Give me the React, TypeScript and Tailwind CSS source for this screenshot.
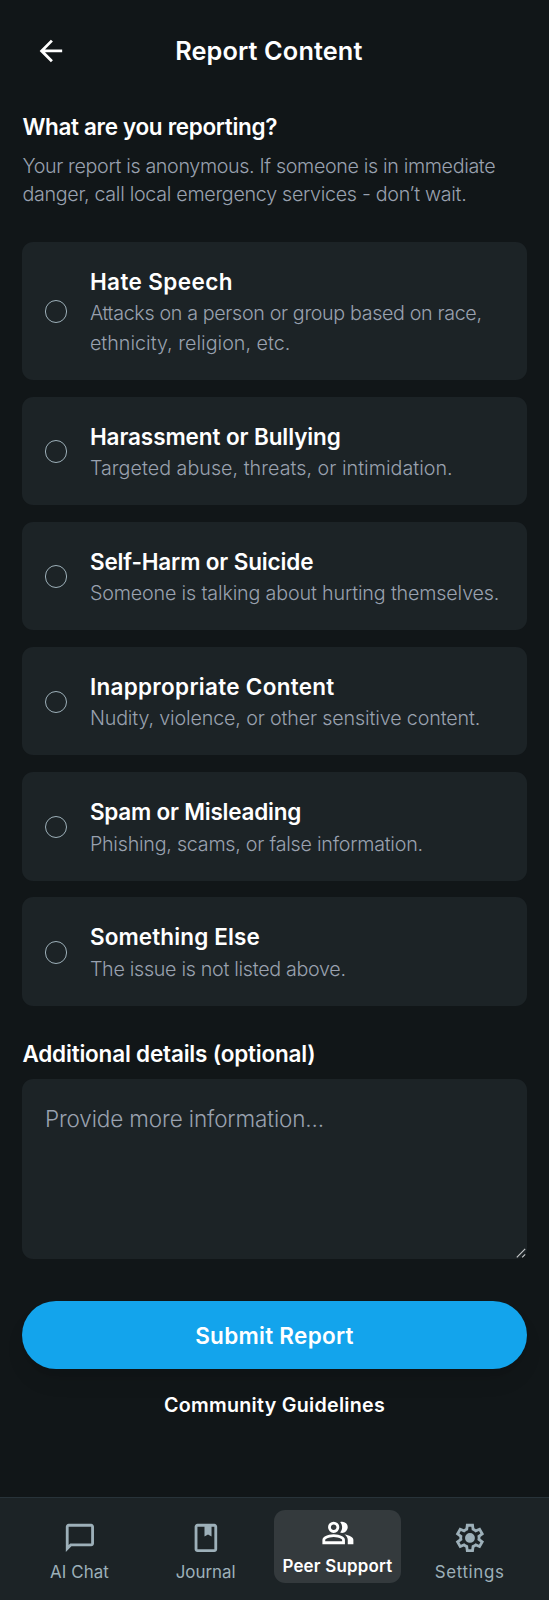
import React from "react";

type Option = { title: string; titleClass: string; lines: { text: string; className: string }[] };

const options: Option[] = [
  {
    title: "Hate Speech",
    titleClass: "tracking-[0.4px]",
    lines: [
      { text: "Attacks on a person or group based on race,", className: "tracking-[-0.35px]" },
      { text: "ethnicity, religion, etc.", className: "tracking-[0.02px]" },
    ],
  },
  {
    title: "Harassment or Bullying",
    titleClass: "tracking-[-0.09px]",
    lines: [{ text: "Targeted abuse, threats, or intimidation.", className: "tracking-[0.03px]" }],
  },
  {
    title: "Self-Harm or Suicide",
    titleClass: "tracking-[-0.14px]",
    lines: [{ text: "Someone is talking about hurting themselves.", className: "tracking-[-0.15px]" }],
  },
  {
    title: "Inappropriate Content",
    titleClass: "tracking-[0.29px]",
    lines: [{ text: "Nudity, violence, or other sensitive content.", className: "tracking-[-0.14px]" }],
  },
  {
    title: "Spam or Misleading",
    titleClass: "tracking-[-0.22px]",
    lines: [{ text: "Phishing, scams, or false information.", className: "tracking-[-0.24px]" }],
  },
  {
    title: "Something Else",
    titleClass: "tracking-[0.12px]",
    lines: [{ text: "The issue is not listed above.", className: "tracking-[-0.3px]" }],
  },
];

const icons = {
  back: "m313-440 224 224-57 56-320-320 320-320 57 56-224 224h487v80H313Z",
  chat: "M80-80v-720q0-33 23.500-56.500T160-880h640q33 0 56.500 23.500T880-800v480q0 33-23.500 56.500T800-240H240L80-80Zm126-240h594v-480H160v525l46-45Zm-46 0v-480 480Z",
  book: "M240-80q-33 0-56.500-23.500T160-160v-640q0-33 23.500-56.500T240-880h480q33 0 56.500 23.500T800-800v640q0 33-23.500 56.500T720-80H240Zm0-80h480v-640h-80v280l-100-60-100 60v-280H240v640Z",
  group:
    "M40-160v-112q0-34 17.500-62.500T104-378q62-31 126-46.500T360-440q66 0 130 15.500T616-378q29 15 46.500 43.500T680-272v112H40Zm720 0v-120q0-44-24.500-84.500T666-434q51 6 96 20.500t84 35.500q36 20 55 44.500t19 53.500v120H760ZM360-480q-66 0-113-47t-47-113q0-66 47-113t113-47q66 0 113 47t47 113q0 66-47 113t-113 47Zm400-160q0 66-47 113t-113 47q-11 0-28-2.500t-28-5.500q27-32 41.500-71t14.500-81q0-42-14.500-81T544-792q14-5 28-6.500t28-1.500q66 0 113 47t47 113ZM120-240h480v-32q0-11-5.500-20T580-306q-54-27-109-40.500T360-360q-56 0-111 13.500T140-306q-9 5-14.500 14t-5.500 20v32Zm240-320q33 0 56.500-23.500T440-640q0-33-23.500-56.500T360-720q-33 0-56.500 23.500T280-640q0 33 23.500 56.500T360-560Z",
  settings:
    "m370-80-16-128q-13-5-24.500-12T307-235l-119 50L78-375l103-78q-1-7-1-13.500v-27q0-6.500 1-13.500L78-585l110-190 119 50q11-8 23-15t24-12l16-128h220l16 128q13 5 24.500 12t22.500 15l119-50 110 190-103 78q1 7 1 13.500v27q0 6.500-2 13.500l103 78-110 190-118-50q-11 8-23 15t-24 12L590-80H370Zm70-80h79l14-106q31-8 57.500-23.500T639-327l99 41 39-68-86-65q5-14 7-29.500t2-31.500q0-16-2-31.500t-7-29.500l86-65-39-68-99 42q-22-23-48.500-38.500T533-694l-13-106h-79l-14 106q-31 8-57.500 23.500T321-633l-99-41-39 68 86 64q-5 15-7 30t-2 32q0 16 2 31t7 30l-86 65 39 68 99-42q22 23 48.500 38.500T427-266l13 106Zm42-180q58 0 99-41t41-99q0-58-41-99t-99-41q-59 0-99.500 41T342-480q0 58 40.500 99t99.500 41Z",
};

function Icon({ name }: { name: keyof typeof icons }) {
  return (
    <svg viewBox="0 -960 960 960" fill="currentColor" className="size-[33.8px] shrink-0" aria-hidden="true">
      <path d={icons[name]} />
    </svg>
  );
}

const tabs: { label: string; icon: keyof typeof icons; className: string; labelClass: string; active?: boolean }[] = [
  { label: "AI Chat", icon: "chat", className: "w-[126.4px]", labelClass: "-ml-[1.5px] tracking-[0.1px]" },
  { label: "Journal", icon: "book", className: "w-[124.6px]", labelClass: "tracking-[0.02px]" },
  { label: "Peer Support", icon: "group", className: "mx-[6px] w-[127px]", labelClass: "tracking-[0.23px]", active: true },
  { label: "Settings", icon: "settings", className: "w-[125.2px]", labelClass: "tracking-[0.65px]" },
];

function OptionCard({ option }: { option: Option }) {
  return (
    <label className="flex items-center gap-[22.5px] rounded-[11.3px] bg-[#1c2326] px-[22.5px] pt-[22.9px] pb-[21.500px]">
      <input
        type="radio"
        name="reason"
        className="size-[22.5px] shrink-0 appearance-none rounded-full border border-[#9db0b9] checked:border-[7px] checked:border-[#13a4ec]"
      />
      <span className="flex flex-col whitespace-nowrap">
        <span className={`text-[22.5px] leading-[34.4px] font-semibold text-white ${option.titleClass}`}>{option.title}</span>
        {option.lines.map((line) => (
          <span key={line.text} className={`text-[19.7px] leading-[29.5px] font-light text-gray-400 ${line.className}`}>
            {line.text}
          </span>
        ))}
      </span>
    </label>
  );
}

export default function App() {
  return (
    <div className="flex h-[1600px] w-full flex-col overflow-hidden bg-[#111618] font-['Inter','Noto_Sans',sans-serif] text-white">
      <header className="flex h-[110.300px] shrink-0 items-start px-[22.6px] pt-[22.8px]">
        <button className="flex size-[56.3px] items-center justify-center" aria-label="Back">
          <Icon name="back" />
        </button>
        <h1 className="flex-1 pt-[0.5px] pr-[67.6px] text-center text-[25.3px] leading-[56.3px] font-semibold tracking-[0.11px]">
          Report Content
        </h1>
      </header>

      <main className="flex min-h-0 flex-1 flex-col px-[22.4px]">
        <h2 className="text-[22.5px] leading-[33.8px] font-semibold tracking-[-0.33px]">What are you reporting?</h2>
        <p className="mt-[8.400px] text-[19.7px] leading-[28px] font-light whitespace-nowrap text-gray-400">
          <span className="tracking-[-0.35px]">Your report is anonymous. If someone is in immediate</span>
          <br />
          <span className="tracking-[-0.3px]">danger, call local emergency services - don’t wait.</span>
        </p>

        <div className="mt-[33.5px] flex flex-col gap-[16.9px]">
          {options.map((option) => (
            <OptionCard key={option.title} option={option} />
          ))}
        </div>

        <label htmlFor="details" className="mt-[31.500px] text-[22.5px] leading-[33.8px] font-semibold tracking-[-0.19px]">
          Additional details (optional)
        </label>
        <div className="relative mt-[7.800px] h-[180.200px] shrink-0">
          <textarea
            id="details"
            placeholder="Provide more information..."
            className="block size-full resize-none rounded-[11.3px] bg-[#1c2326] px-[22.5px] pt-[22.700px] text-[22.5px] leading-[33.8px] font-light tracking-[-0.12px] placeholder:text-gray-400"
          />
          <svg viewBox="0 0 10 10" className="absolute right-[0.5px] bottom-[1px] size-[10px] text-[#c4c7c8]" aria-hidden="true">
            <path d="M0.800 9.300 9.200 0.900M6.200 9.300 9.200 6.300" fill="none" stroke="currentColor" strokeWidth="1.200" />
          </svg>
        </div>

        <button className="mt-[41.900px] h-[68px] shrink-0 rounded-full bg-[#13a4ec] pt-[1px] text-[22.5px] font-semibold tracking-[0.28px] shadow-[0_14px_21px_-4px_rgba(0,0,0,0.1),0_6px_8px_-6px_rgba(0,0,0,0.1)]">
          Submit Report
        </button>
        <a className="mt-[22.5px] text-center text-[19.7px] leading-[28.2px] font-semibold tracking-[0.26px]">Community Guidelines</a>
      </main>

      <nav className="flex h-[103px] shrink-0 items-start border-t-[1.4px] border-[#283339] bg-[#1c2326] pt-[12.2px] pl-[17px]">
        {tabs.map((tab) => (
          <a
            key={tab.label}
            className={`flex flex-col items-center rounded-[11.3px] ${tab.className} ${
              tab.active ? "h-[73.200px] bg-[#343a3d] pt-[5.600px] text-white" : "pt-[11.200px] text-[#9db0b9]"
            }`}
          >
            <Icon name={tab.icon} />
            <span
              className={`mt-[5.500px] text-[16.9px] leading-[22.5px] whitespace-nowrap ${tab.active ? "font-semibold" : "font-normal"} ${tab.labelClass}`}
            >
              {tab.label}
            </span>
          </a>
        ))}
      </nav>
    </div>
  );
}
